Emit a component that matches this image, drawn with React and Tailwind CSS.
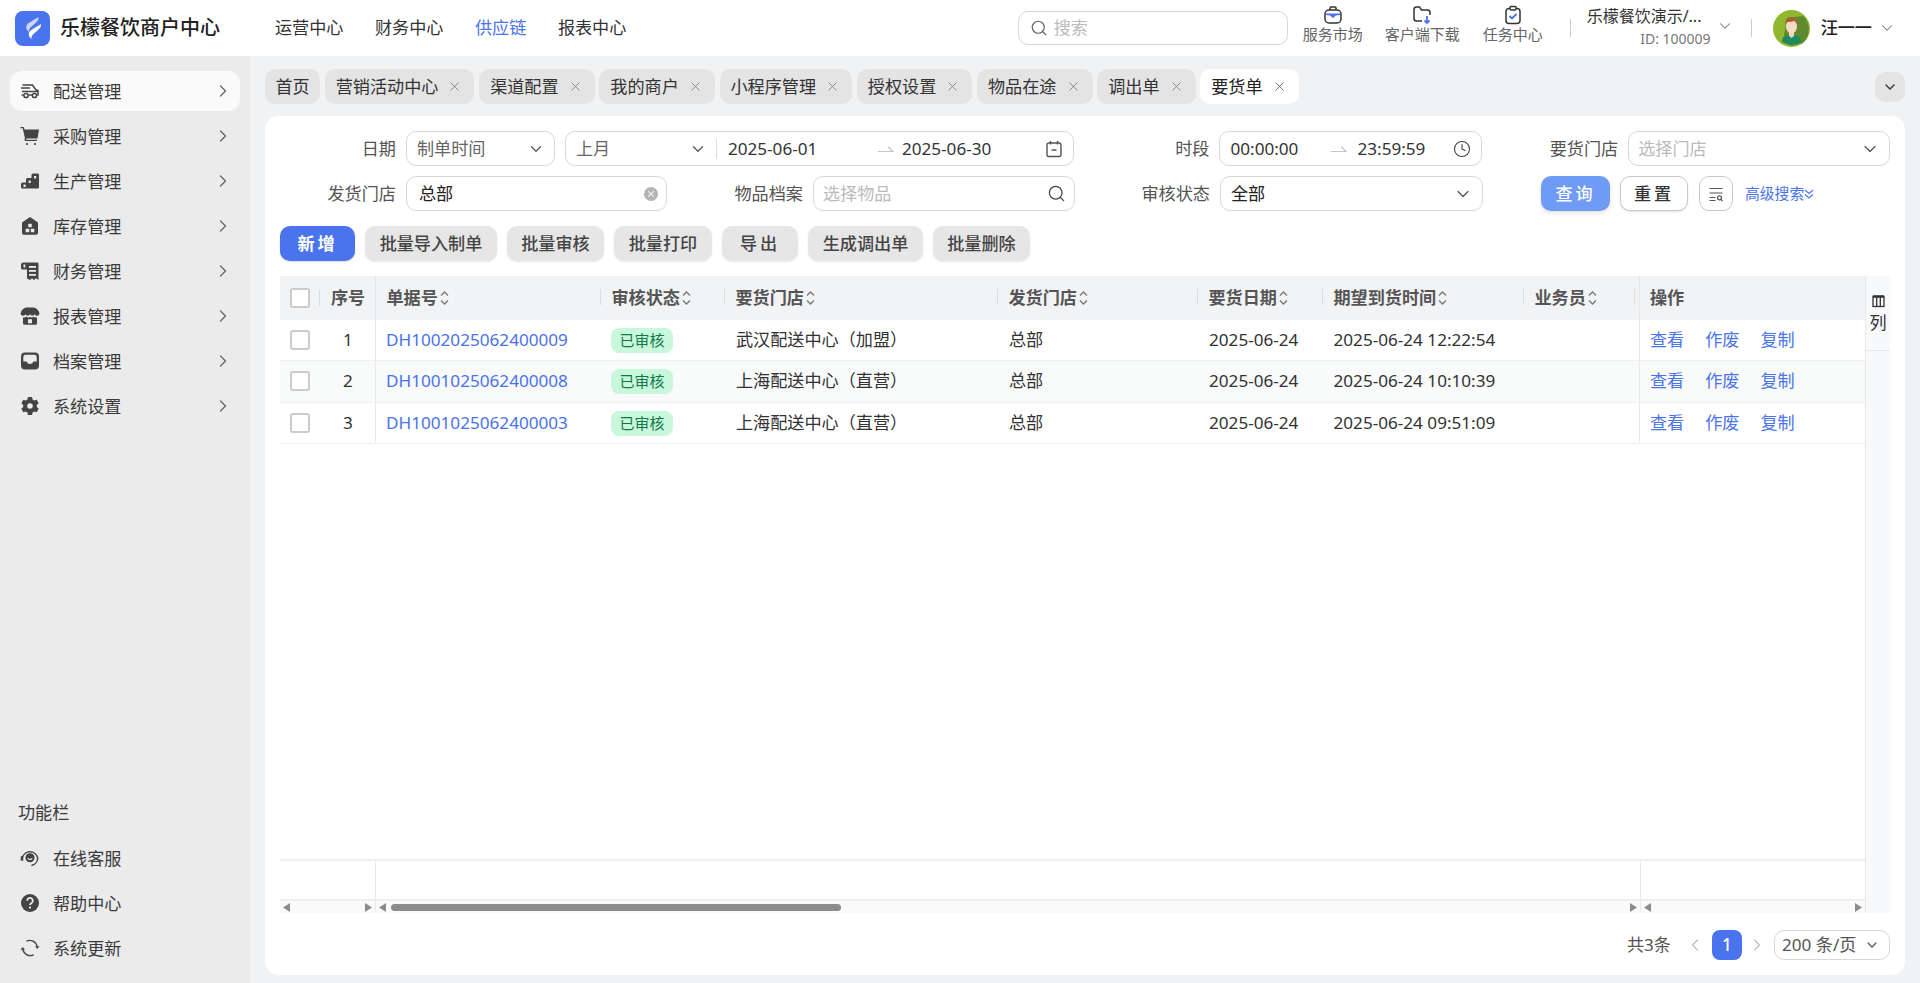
import { ChevronDown, ChevronRight, ChevronLeft, X, Search, Clock } from 'lucide-react';

const navItems = ['运营中心', '财务中心', '供应链', '报表中心'];

const tabs = ['营销活动中心', '渠道配置', '我的商户', '小程序管理', '授权设置', '物品在途', '调出单'];

const columns = [
  { title: '单据号', w: 'w-[225px]' },
  { title: '审核状态', w: 'w-[124px]' },
  { title: '要货门店', w: 'w-[273px]' },
  { title: '发货门店', w: 'w-[200px]' },
  { title: '要货日期', w: 'w-[125px]' },
  { title: '期望到货时间', w: 'w-[201px]' },
  { title: '业务员', w: 'w-[111px]' },
];

const rows = [
  { id: 'DH1002025062400009', store: '武汉配送中心（加盟）', time: '2025-06-24 12:22:54' },
  { id: 'DH1001025062400008', store: '上海配送中心（直营）', time: '2025-06-24 10:10:39' },
  { id: 'DH1001025062400003', store: '上海配送中心（直营）', time: '2025-06-24 09:51:09' },
];

const TruckIcon = () => (
  <svg width="20" height="20" viewBox="0 0 20 20" fill="none" stroke="#444" strokeWidth="1.500">
    <path d="M2.500 4h10l3 4.500 2.500 1V14h-.8M3.500 14H1.500M8.500 14h3.500M1 7h9M2 10.500h16" />
    <circle cx="6" cy="14.500" r="2.100" />
    <circle cx="14.500" cy="14.500" r="2.100" />
  </svg>
);
const CartIcon = () => (
  <svg width="20" height="20" viewBox="0 0 20 20" fill="#444">
    <path d="M.5 1h3.200l.8 2.500H19L17.500 12.500H6.200v1.300H17v1.200H4.700V11L2.700 2.300H.5z" />
    <circle cx="7" cy="18" r="1.100" />
    <circle cx="15" cy="18" r="1.100" />
  </svg>
);
const StepsIcon = () => (
  <svg width="20" height="20" viewBox="0 0 20 20" fill="#444">
    <path fillRule="evenodd" d="M13 2.500h4.500a1.500 1.500 0 0 1 1.500 1.500v12a1.500 1.500 0 0 1-1.500 1.500h-15A1.500 1.500 0 0 1 1 16v-3a1.500 1.500 0 0 1 1.500-1.500H6V8.500A1.500 1.500 0 0 1 7.500 7h4V4A1.500 1.500 0 0 1 13 2.500zM14 5v2.500h2.200V5zM8.600 9.500V12h2.200V9.500zM3.500 13.500V16h2.200v-2.500z" />
  </svg>
);
const HouseIcon = () => (
  <svg width="20" height="20" viewBox="0 0 20 20" fill="#444">
    <path d="M10 1 L18 6.500V17a1.800 1.800 0 0 1-1.800 1.800H3.800A1.800 1.800 0 0 1 2 17V6.500z" />
    <rect x="8.300" y="7.800" width="3.400" height="3.400" rx=".5" fill="#ebebeb" />
    <rect x="5.700" y="12.800" width="3.500" height="3.500" rx=".5" fill="#ebebeb" />
    <rect x="10.800" y="12.800" width="3.500" height="3.500" rx=".5" fill="#ebebeb" />
  </svg>
);
const LedgerIcon = () => (
  <svg width="20" height="20" viewBox="0 0 20 20" fill="#444">
    <path d="M3.500 1.500h14a1 1 0 0 1 1 1V19l-2.500-1.800-2 1.800-2-1.800-2 1.800L7 17.500V8.500H2.500A1.500 1.500 0 0 1 1 7V4a2.500 2.500 0 0 1 2.500-2.500z" />
    <rect x="3.500" y="3.500" width="1.800" height="3" fill="#ebebeb" />
    <rect x="9" y="5" width="7" height="1.800" fill="#ebebeb" />
    <rect x="9" y="9" width="7" height="1.800" fill="#ebebeb" />
    <rect x="9" y="13" width="7" height="1.800" fill="#ebebeb" />
  </svg>
);
const StoreIcon = () => (
  <svg width="20" height="20" viewBox="0 0 20 20" fill="#444">
    <path d="M6 1.500h8c2.500.5 4.800 2.500 5.500 6a2.500 2.500 0 0 1-4.800.8 2.600 2.600 0 0 1-4.700 0 2.600 2.600 0 0 1-4.700 0A2.500 2.500 0 0 1 .5 7.500c.7-3.500 3-5.500 5.500-6z" />
    <path fillRule="evenodd" d="M3 11.300c1.200.4 2.300.2 3.300-.6 1 .9 2.500 1.100 3.700.4 1.200.7 2.700.5 3.700-.4 1 .8 2.100 1 3.300.6v6a1.500 1.500 0 0 1-1.500 1.500h-11A1.500 1.500 0 0 1 3 17.300zM8 13.300v4h4v-4z" />
  </svg>
);
const InboxIcon = () => (
  <svg width="20" height="20" viewBox="0 0 20 20" fill="#444">
    <path fillRule="evenodd" d="M5 1.500h10a4 4 0 0 1 4 4v9a4 4 0 0 1-4 4H5a4 4 0 0 1-4-4v-9a4 4 0 0 1 4-4zM5.500 3.800A2.200 2.200 0 0 0 3.300 6v4.500h3.400c.6 1.800 1.800 2.500 3.300 2.500s2.700-.7 3.300-2.500h3.400V6a2.200 2.200 0 0 0-2.200-2.200z" />
  </svg>
);
const GearIcon = () => (
  <svg width="20" height="20" viewBox="0 0 20 20" fill="#444">
    <path
      d="M8 1h4l.6 2.600 1.600.9 2.500-.8 2 3.500-1.900 1.800v2l1.900 1.800-2 3.500-2.500-.8-1.600.9L12 19H8l-.6-2.600-1.600-.9-2.500.8-2-3.500L3.200 11V9L1.300 7.200l2-3.500 2.500.8 1.600-.9zM10 7.200a2.800 2.800 0 1 0 0 5.600 2.800 2.800 0 0 0 0-5.600z"
      fillRule="evenodd"
    />
  </svg>
);
const ServiceIcon = () => (
  <svg width="22" height="22" viewBox="0 0 22 22" fill="none" stroke="#444" strokeWidth="1.600">
    <path d="M2.500 11a8.700 8.700 0 0 1 17 0 8.700 8.700 0 0 1-7 8.300" />
    <circle cx="11" cy="10.800" r="5" fill="#444" stroke="none" />
    <path d="M8.500 11.500c1.200 1.500 3.800 1.500 5 0" stroke="#ebebeb" strokeWidth="1.300" />
    <path d="M2.200 9v5" strokeWidth="2.800" />
  </svg>
);
const HelpIcon = () => (
  <svg width="20" height="20" viewBox="0 0 20 20">
    <circle cx="10" cy="10" r="9" fill="#444" />
    <path d="M7.200 7.800a2.800 2.800 0 1 1 4.300 2.300c-1 .6-1.500 1-1.500 2" fill="none" stroke="#ebebeb" strokeWidth="1.800" />
    <circle cx="10" cy="14.600" r="1.100" fill="#ebebeb" />
  </svg>
);
const SyncIcon = () => (
  <svg width="22" height="22" viewBox="0 0 22 22" fill="none" stroke="#444" strokeWidth="1.500">
    <path d="M7 3.500a8.200 8.200 0 0 1 11.800 6" />
    <path d="M15 18.500a8.200 8.200 0 0 1-11.800-6" />
    <path d="M16.500 9h5l-2.500 3z" fill="#444" stroke="none" />
    <path d="M.5 13h5L3 10z" fill="#444" stroke="none" />
  </svg>
);

const sideItems = [
  { label: '配送管理', icon: TruckIcon, active: true },
  { label: '采购管理', icon: CartIcon },
  { label: '生产管理', icon: StepsIcon },
  { label: '库存管理', icon: HouseIcon },
  { label: '财务管理', icon: LedgerIcon },
  { label: '报表管理', icon: StoreIcon },
  { label: '档案管理', icon: InboxIcon },
  { label: '系统设置', icon: GearIcon },
];

const sideBottom = [
  { label: '在线客服', icon: ServiceIcon },
  { label: '帮助中心', icon: HelpIcon },
  { label: '系统更新', icon: SyncIcon },
];

function Logo() {
  return (
    <div className="w-[35px] h-[35px] rounded-[8px] bg-[#4a73ee] flex items-center justify-center">
      <svg width="24" height="26" viewBox="0 0 24 26" fill="#fff">
        <path d="M17.500 2c.3 2.500-.8 4-3 6l-4.500 4c-1.500 1.400-2.300 2.800-2 5-3-2.500-3.800-5.800-1-8.500l5.500-3.500c2-1 3.500-1.800 5-3z" opacity=".72" />
        <path d="M20 9c.3 2.500-.8 4-3 6l-4.500 4c-1.500 1.400-2.300 2.800-2 5-3-2.500-3.800-5.800-1-8.500l5.500-3.500c2-1 3.500-1.800 5-3z" />
      </svg>
    </div>
  );
}

function Avatar() {
  return (
    <svg width="37" height="37" viewBox="0 0 37 37">
      <circle cx="18.500" cy="18.500" r="18.500" fill="#8fb82f" />
      <path d="M14 8 L30 6 A18.500 18.500 0 0 1 30 33 L18 36 L10 31z" fill="#5f8a2e" />
      <path d="M9 32c0-5 3-7 9.500-7S28 27 28 32a18.500 18.500 0 0 1-19 0z" fill="#1f8a5e" />
      <path d="M16 21h5v5l-2.500 2-2.500-2z" fill="#f3d3bb" />
      <ellipse cx="18.500" cy="16.500" rx="5.500" ry="7" fill="#f6dcc6" />
      <path d="M12.500 16c-1-6 2.500-9 6-9s7 3 6 9c-.5-3-2-4.500-3.500-5-2 1-6 1-7 1-1 1-1.500 2-1.500 4z" fill="#a5622a" />
    </svg>
  );
}

function ToolIcon({ type }) {
  if (type === 'market') {
    return (
      <svg width="20" height="20" viewBox="0 0 20 20" fill="none" stroke="#333" strokeWidth="1.500">
        <rect x="2" y="5" width="16" height="13" rx="4" />
        <path d="M7 5V3a1 1 0 0 1 1-1h4a1 1 0 0 1 1 1v2" />
        <path d="M3 8.500h14v1.500l-4 .5-3 2.500-3-2.500-4-.5z" fill="#4a73ee" stroke="none" />
      </svg>
    );
  }
  if (type === 'download') {
    return (
      <svg width="20" height="20" viewBox="0 0 20 20" fill="none" stroke="#333" strokeWidth="1.500">
        <path d="M10 16H4.500A2.500 2.500 0 0 1 2 13.500v-9A2.500 2.500 0 0 1 4.500 2h3l2 3h6A2.500 2.500 0 0 1 18 7.500V10" />
        <path d="M15 11v7M12.500 15.500 15 18l2.500-2.500" stroke="#4a73ee" strokeWidth="1.800" />
      </svg>
    );
  }
  return (
    <svg width="20" height="20" viewBox="0 0 20 20" fill="none" stroke="#333" strokeWidth="1.500">
      <rect x="3" y="3.500" width="14" height="15" rx="3" />
      <rect x="7" y="1.500" width="6" height="3.500" rx="1" fill="#fff" />
      <path d="M6.500 11l2.500 2.500 4.500-4.500" stroke="#4a73ee" strokeWidth="1.800" />
    </svg>
  );
}

function SortIcon() {
  return (
    <svg width="11" height="18" viewBox="0 0 11 18" fill="none" stroke="#777" strokeWidth="1.300" className="ml-[1px] shrink-0">
      <path d="M2 6.500 5.500 3 9 6.500" />
      <path d="M2 11.500 5.500 15 9 11.500" />
    </svg>
  );
}

function Arrow({ dir }) {
  return (
    <svg width="7" height="9" viewBox="0 0 7 9" fill="#8c8c8c" className="shrink-0">
      {dir === 'left' ? <path d="M7 0v9L0 4.500z" /> : <path d="M0 0v9l7-4.500z" />}
    </svg>
  );
}

function RangeArrow() {
  return (
    <svg width="16" height="8" viewBox="0 0 16 8" fill="none" stroke="#c4c4c4" strokeWidth="1.200">
      <path d="M0 6.500h15L10 1.500" />
    </svg>
  );
}

function Field({ className = '', children }) {
  return (
    <div className={`h-[35px] flex items-center rounded-[10px] border border-[#d9d9d9] bg-white text-[17.14px] ${className}`}>
      {children}
    </div>
  );
}

function Label({ w, children }) {
  return <div className={`${w} pr-[10px] shrink-0 text-right text-[17.14px] text-[#555]`}>{children}</div>;
}

function Sidebar() {
  return (
    <aside className="w-[250px] shrink-0 bg-[#ebebeb] flex flex-col pt-[15px] pb-[15px] px-[10px] text-[17.14px] text-[#3a3a3a]">
      <div className="flex flex-col gap-[5px]">
        {sideItems.map(item => (
          <div key={item.label} className={`h-[40px] flex items-center rounded-[12px] pl-[10px] ${item.active ? 'bg-[#fafafa]' : ''}`}>
            <span className="w-[20px] flex justify-center">
              <item.icon />
            </span>
            <span className="ml-[13px] pt-[1px]">{item.label}</span>
            <ChevronRight size={20} strokeWidth={1.5} color="#666" className="ml-auto mr-[7px]" />
          </div>
        ))}
      </div>
      <div className="mt-auto">
        <div className="pl-[8px] h-[24px] leading-[24px] mb-[13px]">功能栏</div>
        <div className="flex flex-col gap-[5px]">
          {sideBottom.map(item => (
            <div key={item.label} className="h-[40px] flex items-center pl-[10px]">
              <span className="w-[20px] flex justify-center">
                <item.icon />
              </span>
              <span className="ml-[13px] pt-[1px]">{item.label}</span>
            </div>
          ))}
        </div>
      </div>
    </aside>
  );
}

function Filters() {
  return (
    <div className="flex flex-col gap-[10px]">
      <div className="flex items-center">
        <Label w="w-[126px]">日期</Label>
        <Field className="w-[149px] pl-[10px] pr-[9px] justify-between text-[#666]">
          <span>制单时间</span>
          <ChevronDown size={18} strokeWidth={1.6} color="#555" />
        </Field>
        <Field className="w-[510px] ml-[10px] pl-[10px] text-[#333]">
          <span className="text-[#666] w-[113px]">上月</span>
          <ChevronDown size={18} strokeWidth={1.6} color="#555" />
          <span className="w-px h-[20px] bg-[#ddd] ml-[9px]" />
          <span className="ml-[11px] w-[150px]">2025-06-01</span>
          <span className="w-[24px] flex"><RangeArrow /></span>
          <span>2025-06-30</span>
          <svg width="18" height="18" viewBox="0 0 18 18" fill="none" stroke="#555" strokeWidth="1.400" className="ml-auto mr-[10px]">
            <rect x="2" y="3" width="14" height="13.500" rx="2" />
            <path d="M5.500 1v3.500M12.500 1v3.500M6.500 10h5" />
          </svg>
        </Field>
        <Label w="w-[145px]">时段</Label>
        <Field className="w-[263px] pl-[10px] text-[#333]">
          <span className="w-[101px]">00:00:00</span>
          <RangeArrow />
          <span className="ml-[10px]">23:59:59</span>
          <Clock size={18} strokeWidth={1.5} color="#444" className="ml-auto mr-[10px]" />
        </Field>
        <Label w="w-[146px]">要货门店</Label>
        <Field className="w-[262px] pl-[9px] pr-[9px] justify-between text-[#bbb]">
          <span>选择门店</span>
          <ChevronDown size={20} strokeWidth={1.5} color="#555" />
        </Field>
      </div>
      <div className="flex items-center">
        <Label w="w-[126px]">发货门店</Label>
        <Field className="w-[261px] pl-[12px] pr-[8px] justify-between text-[#222]">
          <span>总部</span>
          <span className="w-[14px] h-[14px] rounded-full bg-[#b5b5b5] flex items-center justify-center">
            <X size={10} strokeWidth={2.5} color="#fff" />
          </span>
        </Field>
        <Label w="w-[146px]">物品档案</Label>
        <Field className="w-[262px] pl-[9px] pr-[8px] justify-between text-[#bbb]">
          <span>选择物品</span>
          <Search size={19} strokeWidth={1.6} color="#444" />
        </Field>
        <Label w="w-[145px]">审核状态</Label>
        <Field className="w-[263px] pl-[10px] pr-[9px] justify-between text-[#222]">
          <span>全部</span>
          <ChevronDown size={20} strokeWidth={1.5} color="#555" />
        </Field>
        <button className="ml-[58px] w-[69px] h-[35px] rounded-[10px] bg-[#6f9bf5] text-white text-[17.14px] font-medium tracking-[3px] shadow-[0_2px_4px_rgba(0,0,0,0.12)]">查询</button>
        <button className="ml-[10px] w-[68px] h-[35px] rounded-[10px] bg-white border border-[#c8c8c8] text-[#333] text-[17.14px] font-medium tracking-[3px] shadow-[0_1px_2px_rgba(0,0,0,0.12)]">重置</button>
        <button className="ml-[11px] w-[34px] h-[35px] rounded-[10px] bg-white border border-[#c8c8c8] flex items-center justify-center">
          <svg width="16" height="16" viewBox="0 0 16 16" fill="none" stroke="#555" strokeWidth="1.200">
            <path d="M1.500 2.500h13M1.500 7h13M1.500 11.500h6M1.500 14.500h6" />
            <circle cx="11.500" cy="11.800" r="2" />
            <path d="M13 13.500l1.500 1.500" />
          </svg>
        </button>
        <span className="ml-[12px] text-[14.8px] text-[#4a73ee] flex items-center">
          高级搜索
          <svg width="10" height="12" viewBox="0 0 10 12" fill="none" stroke="#4a73ee" strokeWidth="1.100">
            <path d="M1 2l4 3.500L9 2M1 6.500 5 10l4-3.500" />
          </svg>
        </span>
      </div>
    </div>
  );
}

function Toolbar() {
  const gray = 'h-[35px] rounded-[10px] bg-[#e6e6e6] text-[17.14px] font-medium text-[#444] shadow-[0_1px_2px_rgba(0,0,0,0.1)]';
  return (
    <div className="flex gap-[10px] mt-[15px]">
      <button className="h-[35px] w-[75px] rounded-[10px] bg-[#4a73ee] text-white text-[17.14px] font-bold tracking-[3px] shadow-[0_1px_2px_rgba(0,0,0,0.15)]">新增</button>
      <button className={`${gray} w-[132px]`}>批量导入制单</button>
      <button className={`${gray} w-[97px]`}>批量审核</button>
      <button className={`${gray} w-[98px]`}>批量打印</button>
      <button className={`${gray} w-[76px] tracking-[3px]`}>导出</button>
      <button className={`${gray} w-[115px]`}>生成调出单</button>
      <button className={`${gray} w-[97px]`}>批量删除</button>
    </div>
  );
}

function DataTable() {
  return (
    <div className="flex mt-[15px] h-[637px]">
      <div className="w-[1585px] flex flex-col">
        <div className="h-[43.5px] shrink-0 flex items-center bg-[#f2f3f5] text-[17.14px] font-bold text-[#555]">
          <div className="w-[96px] h-full shrink-0 flex items-center border-r border-[#e8e8e8]">
            <span className="ml-[10px] w-[20px] h-[20px] rounded-[3px] border-2 border-[#ccc] bg-white" />
            <span className="ml-[9px] w-px h-[16px] bg-[#dcdcdc]" />
            <span className="flex-1 text-center pl-[1px]">序号</span>
          </div>
          {columns.map(col => (
            <div key={col.title} className={`${col.w} h-full shrink-0 flex items-center pl-[10.5px] relative`}>
              {col.title}
              <SortIcon />
              <span className="absolute right-0 top-[13px] w-px h-[16px] bg-[#dcdcdc]" />
            </div>
          ))}
          <div className="w-[4px] shrink-0" />
          <div className="flex-1 h-full flex items-center pl-[10px] border-l border-[#e8e8e8]">操作</div>
        </div>
        {rows.map((row, i) => (
          <div key={row.id} className={`h-[41.5px] shrink-0 flex items-center border-b-[1.5px] border-[#eeeeee] text-[17.14px] text-[#333] ${i === 1 ? 'bg-[#f9fafa]' : 'bg-white'}`}>
            <div className="w-[96px] h-full shrink-0 flex items-center border-r border-[#e8e8e8]">
              <span className="ml-[10px] w-[20px] h-[20px] rounded-[3px] border-2 border-[#ccc] bg-white" />
              <span className="flex-1 text-center pl-[11px]">{i + 1}</span>
            </div>
            <div className="w-[225px] shrink-0 pl-[10px] text-[#4a73ee] whitespace-nowrap">{row.id}</div>
            <div className="w-[124px] shrink-0 pl-[10px]">
              <span className="inline-flex items-center justify-center w-[62px] h-[25px] rounded-[8px] bg-[#c9f7dc] text-[15px] text-[#0f7a48]">已审核</span>
            </div>
            <div className="w-[273px] shrink-0 pl-[11px]">{row.store}</div>
            <div className="w-[200px] shrink-0 pl-[11px]">总部</div>
            <div className="w-[125px] shrink-0 pl-[11px]">2025-06-24</div>
            <div className="w-[201px] shrink-0 pl-[10.5px] whitespace-nowrap">{row.time}</div>
            <div className="w-[115px] shrink-0" />
            <div className="flex-1 h-full flex items-center gap-[21px] pl-[10px] border-l border-[#e8e8e8] text-[#4a73ee]">
              <span>查看</span>
              <span>作废</span>
              <span>复制</span>
            </div>
          </div>
        ))}
        <div className="flex-1" />
        <div className="h-[40px] shrink-0 flex border-t-2 border-[#eeeeee]">
          <div className="w-[96px] border-r border-[#e8e8e8]" />
          <div className="flex-1" />
          <div className="w-[225px] border-l border-[#e8e8e8]" />
        </div>
        <div className="h-[14px] shrink-0 flex items-center bg-[#fafafa] border-t-2 border-[#eeeeee]">
          <div className="w-[96px] h-full flex items-center justify-between px-[3px] border-r border-[#e8e8e8]">
            <Arrow dir="left" />
            <Arrow dir="right" />
          </div>
          <div className="flex-1 h-full flex items-center px-[3px]">
            <Arrow dir="left" />
            <div className="ml-[5px] w-[450px] h-[7px] rounded-full bg-[#8c8c8c]" />
            <span className="ml-auto"><Arrow dir="right" /></span>
          </div>
          <div className="w-[225px] h-full flex items-center justify-between px-[3px] border-l border-[#e8e8e8]">
            <Arrow dir="left" />
            <Arrow dir="right" />
          </div>
        </div>
      </div>
      <div className="w-[25px] bg-[#f8f9fb] border-l border-[#e8e8e8] flex flex-col items-center">
        <div className="w-full h-[75px] flex flex-col items-center pt-[19px] border-b border-[#e8e8e8] text-[17.14px] leading-[24px] text-[#333]">
          <svg width="13" height="13" viewBox="0 0 13 13" fill="none" stroke="#333" strokeWidth="1.300">
            <rect x="1" y="1.500" width="11" height="10" />
            <path d="M1 1.500h11" strokeWidth="2.500" />
            <path d="M4.700 2v9M8.300 2v9" />
          </svg>
          <span className="mt-[3px]">列</span>
        </div>
      </div>
    </div>
  );
}

export default function App() {
  return (
    <div className="w-[1920px] h-[983px] overflow-hidden flex flex-col bg-[#f1f2f4] font-['Noto_Sans','Noto_Sans_CJK_SC',sans-serif]">
      <header className="h-[56px] shrink-0 bg-white flex items-center pl-[15px]">
        <Logo />
        <div className="ml-[10px] w-[160px] text-[20px] font-medium text-[#222] whitespace-nowrap">乐檬餐饮商户中心</div>
        <nav className="ml-[55px] flex gap-[31.5px] text-[17.14px] text-[#333]">
          {navItems.map(item => (
            <span key={item} className={item === '供应链' ? 'text-[#4a73ee]' : ''}>{item}</span>
          ))}
        </nav>
        <div className="ml-auto flex items-center">
          <div className="w-[270px] h-[34px] rounded-[10px] border border-[#d9d9d9] flex items-center pl-[11px] text-[17.14px] text-[#bbb]">
            <Search size={18} strokeWidth={1.6} color="#666" />
            <span className="ml-[6px]">搜索</span>
          </div>
          <div className="ml-[15px] mb-[7px] w-[60px] flex flex-col items-center text-[15px] leading-[19px] text-[#666]">
            <ToolIcon type="market" />
            <span className="whitespace-nowrap">服务市场</span>
          </div>
          <div className="ml-[22px] mb-[7px] w-[75px] flex flex-col items-center text-[15px] leading-[19px] text-[#666]">
            <ToolIcon type="download" />
            <span className="whitespace-nowrap">客户端下载</span>
          </div>
          <div className="ml-[23px] mb-[7px] w-[60px] flex flex-col items-center text-[15px] leading-[19px] text-[#666]">
            <ToolIcon type="task" />
            <span className="whitespace-nowrap">任务中心</span>
          </div>
          <span className="ml-[27px] w-px h-[18px] bg-[#ccc]" />
          <div className="ml-[16px] mb-[3px] w-[124px] flex flex-col">
            <span className="text-[16px] leading-[20px] text-[#333] whitespace-nowrap">乐檬餐饮演示/...</span>
            <span className="text-[14px] leading-[18px] text-[#777] self-end mt-[4px] whitespace-nowrap">ID: 100009</span>
          </div>
          <ChevronDown size={18} strokeWidth={1.4} color="#777" className="ml-[5px] mb-[4px]" />
          <span className="ml-[17px] w-px h-[18px] bg-[#ccc]" />
          <span className="ml-[21px]"><Avatar /></span>
          <span className="ml-[11px] text-[17.14px] font-medium text-[#222] whitespace-nowrap">汪一一</span>
          <ChevronDown size={18} strokeWidth={1.4} color="#777" className="ml-[6px] mr-[24px]" />
        </div>
      </header>
      <div className="flex-1 min-h-0 flex">
        <Sidebar />
        <main className="flex-1 min-w-0 flex flex-col">
          <div className="flex items-start mt-[13px] pl-[15px] pr-[15px] gap-[4.7px] text-[17.14px] text-[#333]">
            <div className="h-[35px] w-[55px] rounded-[10px] bg-[#e4e4e4] flex items-center justify-center">首页</div>
            {tabs.map(tab => (
              <div key={tab} className="h-[35px] rounded-[10px] bg-[#e4e4e4] flex items-center pl-[11px] pr-[12px]">
                {tab}
                <X size={15} strokeWidth={1.3} color="#777" className="ml-[9px]" />
              </div>
            ))}
            <div className="h-[35px] rounded-[10px] bg-white flex items-center pl-[11px] pr-[12px] text-[#222]">
              要货单
              <X size={15} strokeWidth={1.3} color="#555" className="ml-[9px]" />
            </div>
            <div className="ml-auto mt-[3px] w-[30px] h-[30px] rounded-[10px] bg-[#e4e4e4] flex items-center justify-center">
              <ChevronDown size={16} strokeWidth={2} color="#333" />
            </div>
          </div>
          <section className="mx-[15px] mt-[12px] h-[859px] rounded-[14px] bg-white pt-[15px] px-[15px] flex flex-col">
            <Filters />
            <Toolbar />
            <DataTable />
            <div className="flex items-center justify-end mt-[17px] text-[17.14px] text-[#555]">
              <span>共3条</span>
              <ChevronLeft size={20} strokeWidth={1.3} color="#bbb" className="ml-[14px]" />
              <span className="ml-[7px] w-[30px] h-[30px] rounded-[8px] bg-[#4a73ee] text-white font-medium flex items-center justify-center">1</span>
              <ChevronRight size={20} strokeWidth={1.3} color="#bbb" className="ml-[5px]" />
              <div className="ml-[7px] w-[116px] h-[30px] rounded-[10px] border border-[#d9d9d9] flex items-center justify-between pl-[7px] pr-[9px] whitespace-nowrap">
                <span>200 条/页</span>
                <ChevronDown size={16} strokeWidth={1.8} color="#555" />
              </div>
            </div>
          </section>
        </main>
      </div>
    </div>
  );
}
